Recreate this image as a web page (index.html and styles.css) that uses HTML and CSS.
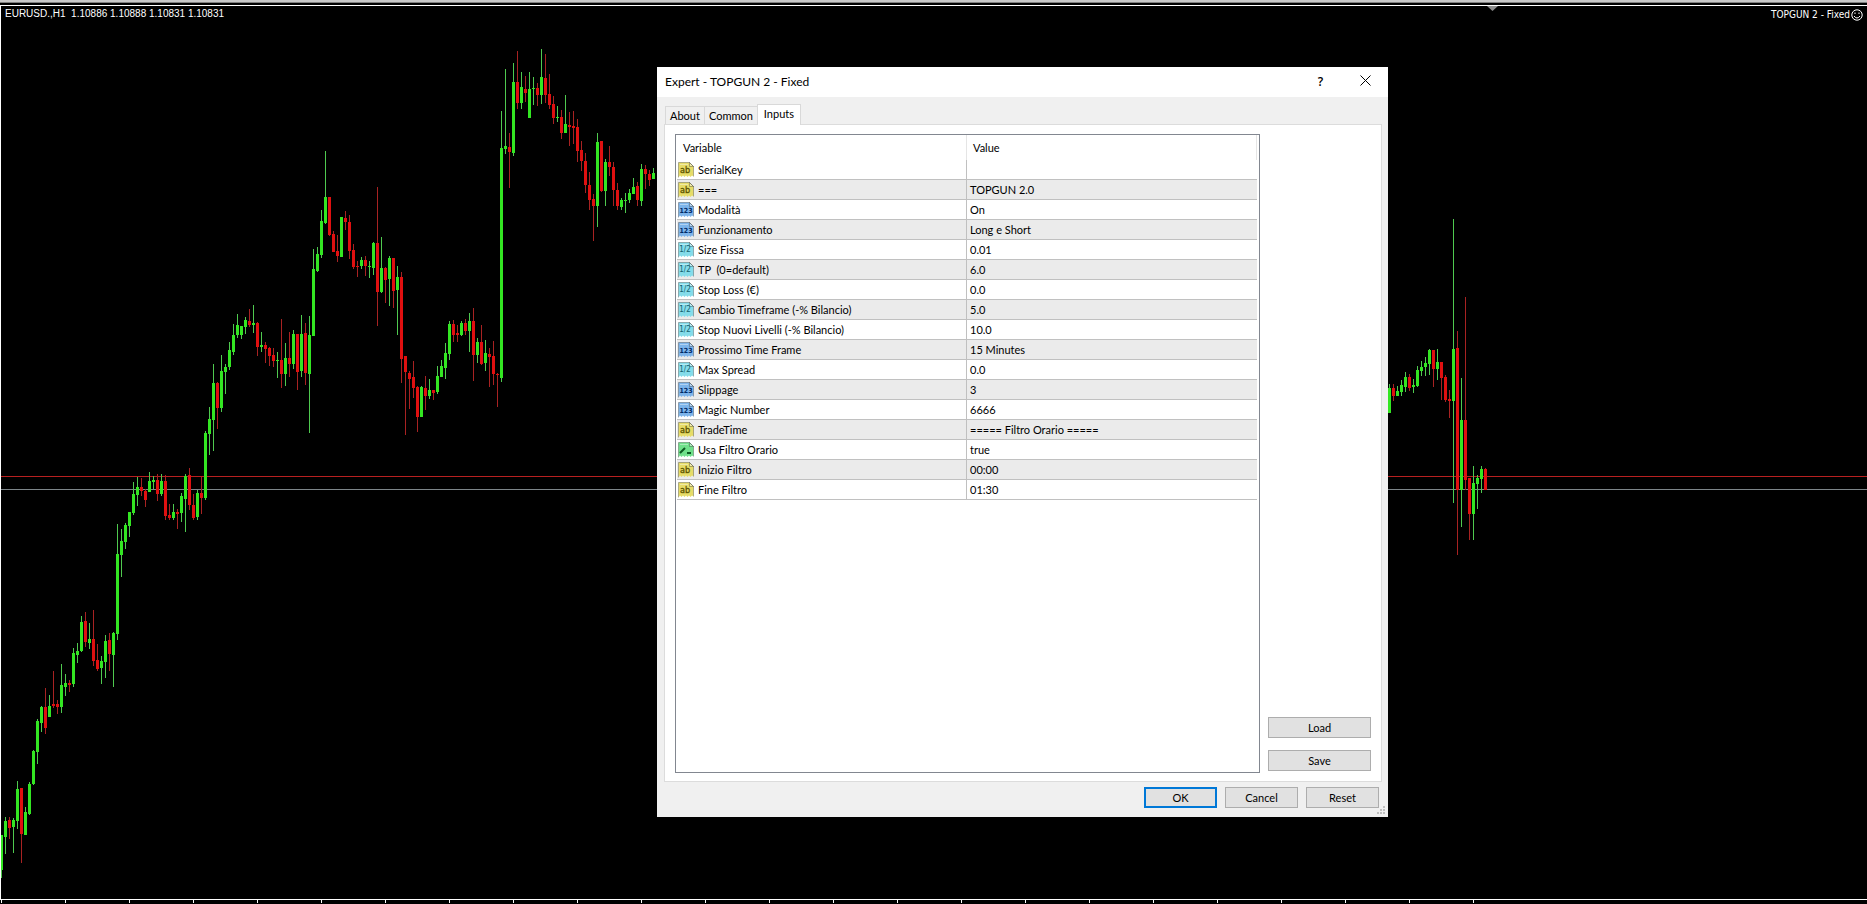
FILE: index.html
```html
<!DOCTYPE html>
<html lang="it">
<head>
<meta charset="utf-8">
<title>EURUSD.,H1</title>
<link rel="stylesheet" href="styles.css">
</head>
<body>
<svg class="symbols" aria-hidden="true">
  <symbol id="sheet" viewBox="0 0 16 16">
    <path d="M.5.5h11l4 4v10l-1.500-1-1.500 1.500-1.500-1.500-1.500 1.500-1.500-1.500-1.500 1.500-1.500-1.500-1.500 1.500-1.500-1.500L.5 15.500z" fill="currentColor"/>
    <path d="M.5 15.500V.5h11l4 4v10" fill="none" stroke="#000" stroke-opacity=".28"/>
    <path d="M2 2h8v1H2z" fill="#fff" fill-opacity=".4"/>
    <path d="M11.500.5v4h4z" fill="#fff" fill-opacity=".45" stroke="#000" stroke-opacity=".3"/>
  </symbol>
</svg>
<main class="terminal">
  <div class="toolbar-edge"></div>
  <section class="chart" aria-label="EURUSD H1">
    <svg class="plot" id="plot" aria-hidden="true"></svg>
    <header class="chart-head">
      <span class="quote">EURUSD.,H1&nbsp; 1.10886 1.10888 1.10831 1.10831</span>
      <span class="expert">TOPGUN 2 - Fixed<svg class="smile" viewBox="0 0 12 12"><circle cx="6" cy="6" r="5.200"/><path d="M3 7q3 4 6 0M4 3.500v1.500M8 3.500v1.500"/></svg></span>
    </header>
  </section>
  <div class="axis"></div>
</main>

<form class="dialog" role="dialog" aria-labelledby="dlg-title">
  <header class="titlebar">
    <h1 id="dlg-title">Expert - TOPGUN 2 - Fixed</h1>
    <button type="button" class="sys help" aria-label="Help">?</button>
    <button type="button" class="sys" aria-label="Close"><svg viewBox="0 0 11 11"><path d="M.5.5l10 10M10.500.5l-10 10"/></svg></button>
  </header>
  <div class="tabs" role="tablist">
    <button type="button" role="tab">About</button>
    <button type="button" role="tab">Common</button>
    <button type="button" role="tab" class="active" aria-selected="true">Inputs</button>
  </div>
  <div class="page">
    <div class="list">
      <table>
        <colgroup><col class="c-var"><col></colgroup>
        <thead><tr><th>Variable</th><th>Value</th></tr></thead>
        <tbody id="rows"></tbody>
      </table>
    </div>
    <div class="side">
      <button type="button">Load</button>
      <button type="button">Save</button>
    </div>
  </div>
  <footer class="actions">
    <button type="button" class="default">OK</button>
    <button type="button">Cancel</button>
    <button type="button">Reset</button>
    <svg class="grip" viewBox="0 0 8 8" aria-hidden="true"><path d="M6 0h2v2H6zM3 3h2v2H3zM6 3h2v2H6zM0 6h2v2H0zM3 6h2v2H3zM6 6h2v2H6z"/></svg>
  </footer>
</form>
<script src="app.js"></script>
</body>
</html>
```
FILE: styles.css
```css
* { box-sizing: border-box; }

body {
  margin: 0;
  background: #000;
  color: #000;
  font-family: Lato, Roboto, "Liberation Sans", sans-serif;
  font-size: 11px;
  overflow: hidden;
}

.symbols { display: none; }

.terminal {
  display: flex;
  flex-direction: column;
  height: 100vh;
}

.toolbar-edge {
  height: 5px;
  flex: none;
  background: linear-gradient(#c8c8c8 0 2px, #808080 2px 3px, #000 3px);
}

.chart {
  position: relative;
  flex: 1;
  min-height: 0;
  border: solid #fff;
  border-width: 1px 0 0 1px;
}

.plot {
  position: absolute;
  inset: 0;
  width: 100%;
  height: 100%;
}

.chart-head {
  position: relative;
  display: flex;
  justify-content: space-between;
  padding: 1px 4px;
  color: #fff;
  font-family: "DejaVu Sans Condensed", "DejaVu Sans", sans-serif;
  font-size: 10px;
  line-height: 14px;
}

.quote { font-family: "Liberation Sans", sans-serif; }

.expert {
  display: flex;
  align-items: center;
  gap: 1px;
  padding-top: 1px;
}

.smile {
  width: 12px;
  height: 12px;
  fill: none;
  stroke: #fff;
}

.axis {
  flex: none;
  height: 5px;
  border-top: 1px solid #fff;
  background: repeating-linear-gradient(90deg, transparent 0 1px, #fff 1px 2px, transparent 2px 64px) 0 0 / 1474px 3px no-repeat;
}

.up { fill: #33e622; }
.down { fill: #e01010; }
.up-wick { fill: #4fc94f; }
.down-wick { fill: #a82222; }
.ask { fill: #b82020; }
.bid { fill: #7d8589; }
.shift { fill: #8c8c8c; }

.dialog {
  position: absolute;
  left: 657px;
  top: 67px;
  width: 731px;
  background: #f0f0f0;
}

button {
  font: inherit;
  color: inherit;
  padding: 0;
}

.titlebar {
  display: flex;
  align-items: center;
  height: 30px;
  padding-left: 8px;
  background: #fff;
}

.titlebar h1 {
  flex: 1;
  margin: 0;
  font: 400 12px/30px Lato, "Open Sans", sans-serif;
}

.sys {
  width: 45px;
  height: 30px;
  border: 0;
  background: none;
  font: 600 12px/28px "Open Sans", sans-serif;
}

.sys svg {
  width: 11px;
  height: 11px;
  fill: none;
  stroke: #000;
}

.tabs {
  display: flex;
  align-items: flex-end;
  padding: 7px 8px 0;
}

.tabs button {
  height: 18px;
  padding: 0 4px;
  border: solid #d9d9d9;
  border-width: 1px 0 0 1px;
  background: #f0f0f0;
  line-height: 17px;
}

.tabs .active {
  position: relative;
  height: 21px;
  margin-bottom: -1px;
  padding: 0 6px 3px;
  border-right-width: 1px;
  background: #fff;
}

.page {
  display: flex;
  gap: 8px;
  margin: 0 6px 0 7px;
  padding: 9px 10px 8px;
  border: 1px solid #dcdcdc;
  background: #fff;
}

.list {
  flex: 1;
  min-height: 639px;
  padding: 0 2px 0 1px;
  border: 1px solid #828790;
}

table {
  width: 100%;
  border-collapse: separate;
  border-spacing: 0;
  table-layout: fixed;
}

.c-var { width: 290px; }

th {
  height: 25px;
  padding: 0 6px;
  font-weight: 400;
  text-align: left;
  border-right: 1px solid #e5e5e5;
}

td {
  height: 20px;
  padding: 0 4px 0 1px;
  border-bottom: 1px solid #c0c0c0;
}

td:first-child { border-right: 1px solid #c0c0c0; }
td + td { padding-left: 3px; }

tbody tr:nth-child(even) { background: #ebebeb; }

.var {
  display: flex;
  align-items: center;
  gap: 4px;
  white-space: pre;
  line-height: 19px;
}

.type {
  width: 16px;
  height: 16px;
}

.type text {
  font: 700 7px "DejaVu Sans Condensed", "DejaVu Sans", sans-serif;
  text-anchor: middle;
}

.string { color: #e6dc68; fill: #5c5200; }
.int { color: #7db4ea; fill: #002a66; }
.double { color: #84dcea; fill: #14606e; }
.bool { color: #6fe08a; fill: #0b5a22; }
.type.string text { font-size: 9px; font-weight: 400; stroke: #5c5200; stroke-width: .3; }
.type.double text { font-size: 8px; font-weight: 400; }

.side {
  display: flex;
  flex-direction: column;
  justify-content: flex-end;
  gap: 12px;
  width: 103px;
  padding-bottom: 2px;
}

.side button,
.actions button {
  height: 21px;
  border: 1px solid #adadad;
  background: #e1e1e1;
}

.actions {
  position: relative;
  display: flex;
  justify-content: flex-end;
  gap: 8px;
  padding: 5px 9px 9px;
}

.actions button { width: 73px; }
.actions .default { border: 2px solid #0078d7; }

.grip {
  position: absolute;
  right: 3px;
  bottom: 3px;
  width: 8px;
  height: 8px;
  fill: #bfbfbf;
}
```
FILE: app.js
```js
// Candles: high, body top, body bottom, low, 1 = rising / 0 = falling. One slot is 4px wide.
const left = [
[835,835,870,878,1],[817,821,837,854,1],[817,820,828,839,0],[818,820,827,853,1],[781,789,821,829,1],
[788,788,834,863,0],[807,812,835,835,1],[782,784,814,815,1],[750,751,784,785,1],[719,721,752,764,1],
[706,707,723,732,1],[688,707,728,734,0],[695,706,717,717,1],[671,704,706,708,0],[700,704,707,714,0],
[664,685,707,713,1],[674,683,687,696,1],[680,683,685,692,0],[648,653,684,687,1],[643,651,655,663,1],
[616,622,651,652,1],[612,621,642,647,0],[623,639,643,649,1],[610,639,661,666,0],[644,660,669,671,0],
[656,661,668,684,1],[635,641,662,678,1],[633,640,654,671,0],[632,633,655,687,1],[524,554,634,640,1],
[529,541,555,577,1],[523,525,542,549,1],[512,512,526,537,1],[482,494,513,515,1],[477,487,495,506,1],
[478,487,491,496,0],[489,491,500,507,0],[472,481,492,492,1],[476,480,482,489,1],[474,480,494,501,0],
[474,481,494,496,1],[475,481,516,520,0],[504,515,518,520,0],[504,512,518,520,1],[509,512,514,529,0],
[493,496,513,522,1],[474,476,499,532,1],[468,475,505,510,0],[494,505,518,520,0],[490,493,517,520,1],
[477,493,498,514,0],[431,433,498,500,1],[407,419,434,455,1],[364,383,420,451,1],[382,383,408,429,0],
[355,371,408,412,1],[364,367,372,394,1],[342,350,367,370,1],[324,335,352,355,1],[314,325,335,338,1],
[326,326,335,339,1],[317,320,327,334,1],[309,321,325,327,0],[305,323,325,333,1],[322,323,347,356,0],
[332,345,347,352,1],[342,345,349,363,0],[347,348,356,366,0],[348,355,361,367,0],[352,360,361,378,1],
[319,360,374,388,0],[343,358,374,386,1],[332,358,364,377,0],[330,334,364,369,1],[334,334,372,390,0],
[315,334,371,377,1],[323,333,373,385,0],[316,335,374,433,1],[249,269,336,336,1],[247,254,271,272,1],
[210,221,255,258,1],[151,197,223,224,1],[197,197,235,236,0],[231,234,252,252,0],[235,251,256,262,0],
[217,217,257,257,1],[211,218,222,230,0],[215,222,251,259,0],[244,250,267,269,0],[261,266,267,277,0],
[257,260,266,269,1],[256,260,266,276,0],[261,266,267,278,1],[242,243,268,275,1],[187,243,292,326,0],
[237,268,292,293,1],[267,268,280,303,0],[256,258,279,306,1],[258,258,291,308,0],[266,277,290,335,1],
[272,277,359,383,0],[356,356,372,435,0],[371,373,379,409,0],[361,377,388,398,0],[386,387,417,432,0],
[386,387,417,417,1],[376,388,396,410,0],[379,390,396,399,1],[390,390,393,400,0],[366,376,392,394,1],
[360,366,377,377,1],[343,353,368,379,1],[321,324,354,360,1],[320,324,335,342,0],[325,333,335,342,0],
[321,323,335,336,1],[319,323,331,335,0],[313,321,331,352,1],[308,321,355,381,0],[338,342,355,363,1],
[325,342,364,365,0],[340,353,363,371,1],[348,354,357,387,0],[341,356,374,385,0],[373,374,375,407,0],
[111,148,378,382,1],[69,146,149,154,1],[133,147,152,188,0],[63,82,153,156,1],[51,82,103,109,0],
[72,87,103,109,1],[76,89,93,102,0],[72,89,118,118,1],[77,88,89,105,1],[83,88,95,106,0],
[49,77,95,104,1],[54,78,95,103,0],[74,94,105,109,0],[96,104,118,124,0],[106,117,118,122,1],
[110,117,133,139,0],[95,124,133,133,1],[112,125,127,146,0],[111,126,128,144,0],[119,127,151,162,0],
[141,150,161,171,0],[153,161,185,193,0],[172,185,200,210,0],[194,199,206,241,0],[133,142,206,227,1],
[141,141,191,192,0],[159,162,191,206,1],[146,162,167,176,0],[162,167,190,206,0],[183,190,206,210,0],
[198,200,207,210,1],[193,200,201,213,1],[189,193,200,203,1],[178,187,194,194,1],[182,186,200,206,0],
[164,169,201,206,1],[165,169,174,189,0],[170,174,180,186,0],[168,173,179,179,1]
];
const right = [
[384,388,413,413,1],[384,388,396,401,0],[386,391,396,396,1],[380,385,392,396,1],[372,377,387,392,1],
[374,377,388,391,0],[379,385,387,393,1],[366,370,386,387,1],[361,367,371,376,1],[357,363,367,376,1],
[349,350,364,375,1],[350,350,369,387,0],[349,362,369,380,1],[362,362,378,400,0],[375,377,400,402,0],
[390,399,401,418,0],[219,349,401,503,1],[331,348,490,555,0],[378,420,490,527,1],[297,420,480,490,0],
[478,478,514,540,0],[466,483,514,540,1],[475,478,484,509,1],[466,469,479,493,1],[468,469,490,490,0]
];
const TOP = 6;
const rect = (c, x, y, w, h) => `<rect class="${c}" x="${x}" y="${y}" width="${w}" height="${h}"/>`;
const draw = (series, first) => series.map(([hi, a, b, lo, up], n) => {
  const x = (first + n) * 4;
  const c = up ? 'up' : 'down';
  return rect(c + '-wick', x, hi - TOP, 1, lo - hi) + rect(c, x - 1, a - TOP, 3, Math.max(1, b - a));
}).join('');
document.getElementById('plot').innerHTML =
  rect('ask', 0, 476 - TOP, '100%', 1) + rect('bid', 0, 489 - TOP, '100%', 1) +
  draw(left, 0) + draw(right, 347) +
  '<path class="shift" d="M1486 0h11l-5.500 5z"/>';

const glyph = {
  string: '<text x="7" y="11">ab</text>',
  int: '<text x="8" y="11">123</text>',
  double: '<text x="7" y="10">1/2</text>',
  bool: '<path d="M2 11l5-5M9 11h4" fill="none" stroke="#0b5a22" stroke-width="2"/>'
};
const inputs = [
  ['string', 'SerialKey', ''],
  ['string', '===', 'TOPGUN 2.0'],
  ['int', 'Modalità', 'On'],
  ['int', 'Funzionamento', 'Long e Short'],
  ['double', 'Size Fissa', '0.01'],
  ['double', 'TP  (0=default)', '6.0'],
  ['double', 'Stop Loss (€)', '0.0'],
  ['double', 'Cambio Timeframe (-% Bilancio)', '5.0'],
  ['double', 'Stop Nuovi Livelli (-% Bilancio)', '10.0'],
  ['int', 'Prossimo Time Frame', '15 Minutes'],
  ['double', 'Max Spread', '0.0'],
  ['int', 'Slippage', '3'],
  ['int', 'Magic Number', '6666'],
  ['string', 'TradeTime', '===== Filtro Orario ====='],
  ['bool', 'Usa Filtro Orario', 'true'],
  ['string', 'Inizio Filtro', '00:00'],
  ['string', 'Fine Filtro', '01:30']
];
document.getElementById('rows').innerHTML = inputs.map(([t, name, value]) =>
  `<tr><td><div class="var"><svg class="type ${t}" viewBox="0 0 16 16"><use href="#sheet"/>${glyph[t]}</svg>${name}</div></td><td>${value}</td></tr>`
).join('');
```
